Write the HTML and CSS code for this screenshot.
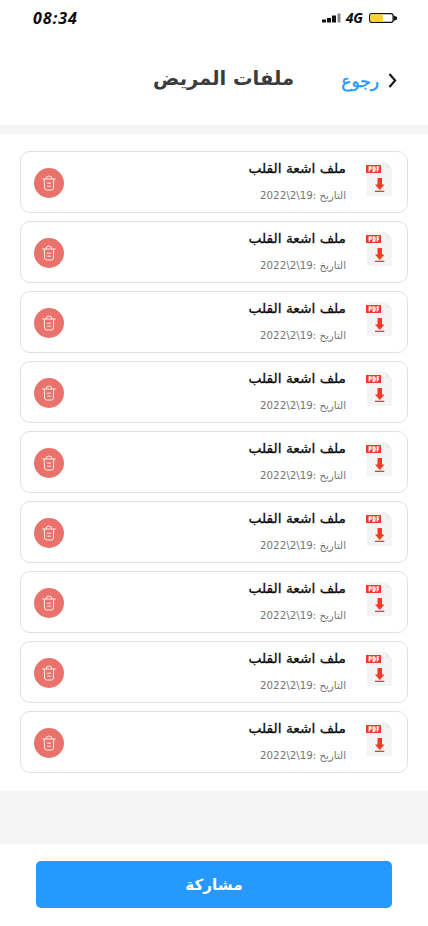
FILE: index.html
```
<!DOCTYPE html>
<html lang="ar" dir="rtl">
<head>
<meta charset="utf-8">
<meta name="viewport" content="width=device-width">
<title>ملفات المريض</title>
<link rel="stylesheet" href="styles.css">
</head>
<body>
<svg class="defs" aria-hidden="true">
  <symbol id="pdf" viewBox="0 0 27 34">
    <path d="M1 0H19.500L26 6.500V34H1Z" fill="#f4f4f5"/>
    <path d="M19.500 0V4.500Q19.500 6.500 21.500 6.500H26Z" fill="#ececed"/>
    <path d="M0 3H15V11H0Z" fill="#f23a2b"/>
    <path d="M3.300 9.500V4.900H4.300Q5.300 4.900 5.300 6T4.300 7.200H3.300M7.200 4.900V9.200H7.800Q9.100 9.200 9.100 7T7.800 4.900ZM11.300 9.600V4.900H13.200M11.300 7.200H13" fill="none" stroke="#fff" stroke-width="1.350"/>
    <path d="M11.500 16H16V22.500H18.500L13.700 28L9 22.500H11.500Z" fill="#f23a2b"/>
    <path d="M9 28.700H18.300V30H9Z" fill="#f23a2b"/>
  </symbol>
  <symbol id="trash" viewBox="0 0 14 16">
    <g fill="none" stroke="#fff" stroke-opacity=".85" stroke-width="1" stroke-linecap="round" stroke-linejoin="round">
      <path d="M.7 4H13.300M4.200 3.800Q4.200 1.200 6 1.200H8Q9.800 1.200 9.800 3.800M2.300 4.200L2.600 13Q2.700 15 4.500 15H9.500Q11.300 15 11.400 13L11.700 4.200"/>
      <path d="M5.300 8.200H8.700M5.500 11.200H8.500"/>
    </g>
  </symbol>
</svg>

<div class="status" dir="ltr">
  <span class="time">08:34</span>
  <svg class="signal" viewBox="0 0 19 10"><path d="M0 6.500H4V9.500H0ZM5 5H9V9.500H5ZM10 2.500H14V9.500H10Z" fill="#111"/><path d="M15.500 .5H18.500V9.500H15.500Z" fill="#888"/></svg>
  <span class="network">4G</span>
  <svg class="battery" viewBox="0 0 28 10"><rect x=".65" y=".65" width="23.500" height="8.700" rx="2.300" fill="#fff" stroke="#111" stroke-width="1.300"/><path d="M2.500 1.300H14V8.700H2.500Q1.300 8.700 1.300 7.500V2.500Q1.300 1.300 2.500 1.300" fill="#ffd22e"/><path d="M24.500 2.500L28 4V6.500L24.500 8Z" fill="#111"/></svg>
</div>

<header class="header">
  <a class="back"><svg class="chevron" viewBox="0 0 9 15"><path d="M1.500 1L7.200 7.500L1.500 14" fill="none" stroke="#111" stroke-width="2"/></svg><span class="back-label">رجوع</span></a>
  <h1 class="title">ملفات المريض</h1>
</header>

<main class="files">
  <article class="file"><svg class="pdf"><use href="#pdf"/></svg><div class="info"><h2 class="name">ملف اشعة القلب</h2><p class="date">التاريخ :19\2\2022</p></div><button class="delete" aria-label="حذف"><svg class="trash"><use href="#trash"/></svg></button></article>
  <article class="file"><svg class="pdf"><use href="#pdf"/></svg><div class="info"><h2 class="name">ملف اشعة القلب</h2><p class="date">التاريخ :19\2\2022</p></div><button class="delete" aria-label="حذف"><svg class="trash"><use href="#trash"/></svg></button></article>
  <article class="file"><svg class="pdf"><use href="#pdf"/></svg><div class="info"><h2 class="name">ملف اشعة القلب</h2><p class="date">التاريخ :19\2\2022</p></div><button class="delete" aria-label="حذف"><svg class="trash"><use href="#trash"/></svg></button></article>
  <article class="file"><svg class="pdf"><use href="#pdf"/></svg><div class="info"><h2 class="name">ملف اشعة القلب</h2><p class="date">التاريخ :19\2\2022</p></div><button class="delete" aria-label="حذف"><svg class="trash"><use href="#trash"/></svg></button></article>
  <article class="file"><svg class="pdf"><use href="#pdf"/></svg><div class="info"><h2 class="name">ملف اشعة القلب</h2><p class="date">التاريخ :19\2\2022</p></div><button class="delete" aria-label="حذف"><svg class="trash"><use href="#trash"/></svg></button></article>
  <article class="file"><svg class="pdf"><use href="#pdf"/></svg><div class="info"><h2 class="name">ملف اشعة القلب</h2><p class="date">التاريخ :19\2\2022</p></div><button class="delete" aria-label="حذف"><svg class="trash"><use href="#trash"/></svg></button></article>
  <article class="file"><svg class="pdf"><use href="#pdf"/></svg><div class="info"><h2 class="name">ملف اشعة القلب</h2><p class="date">التاريخ :19\2\2022</p></div><button class="delete" aria-label="حذف"><svg class="trash"><use href="#trash"/></svg></button></article>
  <article class="file"><svg class="pdf"><use href="#pdf"/></svg><div class="info"><h2 class="name">ملف اشعة القلب</h2><p class="date">التاريخ :19\2\2022</p></div><button class="delete" aria-label="حذف"><svg class="trash"><use href="#trash"/></svg></button></article>
  <article class="file"><svg class="pdf"><use href="#pdf"/></svg><div class="info"><h2 class="name">ملف اشعة القلب</h2><p class="date">التاريخ :19\2\2022</p></div><button class="delete" aria-label="حذف"><svg class="trash"><use href="#trash"/></svg></button></article>
</main>

<footer class="footer"><button class="share"><span class="share-label">مشاركة</span></button></footer>
</body>
</html>
```
FILE: styles.css
```
* { box-sizing: border-box; }
body {
  margin: 0;
  height: 926px;
  display: flex;
  flex-direction: column;
  overflow: hidden;
  background: #f5f5f5;
  color: #0c0c0c;
  font-family: "DejaVu Sans", sans-serif;
}
h1, h2, p { margin: 0; white-space: nowrap; }
svg { display: block; flex: none; }
button { border: 0; padding: 0; font: inherit; }
.defs { width: 0; height: 0; position: absolute; }
.status {
  height: 36px;
  display: flex;
  align-items: center;
  padding: 0 31px 0 33px;
  background: #fff;
  font: italic 700 16px/36px "Noto Sans", sans-serif;
}
.time { margin-right: auto; letter-spacing: 1px; }
.signal { width: 19px; height: 10px; margin-right: 5px; }
.network { font-size: 14px; margin-right: 6px; }
.battery { width: 28px; height: 10px; }
.header {
  height: 89px;
  display: flex;
  align-items: center;
  padding: 0 31px 0 0;
  background: #fff;
}
.back { display: flex; align-items: center; width: 103px; gap: 9px; }
.chevron { width: 9px; height: 15px; }
.back-label {
  color: #2699fb;
  font-size: 17px;
  line-height: 30px;
  -webkit-text-stroke: .5px currentColor;
}
.title { color: #3b3b3d; font-size: 19.5px; line-height: 30px; padding-bottom: 4px; }
.files {
  margin-top: 9px;
  height: 657px;
  padding: 17px 20px;
  display: flex;
  flex-direction: column;
  gap: 8px;
  background: #fff;
}
.file {
  height: 62px;
  flex: none;
  display: flex;
  align-items: flex-start;
  border: 1px solid #e1e1e2;
  border-radius: 10px;
  padding: 0 14px 0 13px;
}
.pdf { width: 27px; height: 34px; margin-top: 10px; }
.info { margin-right: 20px; flex: 1; }
.name {
  font-size: 13.8px;
  font-weight: 400;
  line-height: 20px;
  margin-top: 6px;
  -webkit-text-stroke: .3px currentColor;
}
.date { color: #747474; font-size: 10.25px; line-height: 16px; margin-top: 9px; }
.delete {
  width: 30px;
  height: 30px;
  margin-top: 16px;
  display: grid;
  place-items: center;
  border-radius: 50%;
  background: #e9736c;
}
.trash { width: 14px; height: 16px; }
.footer { height: 82px; margin-top: 53px; padding: 17px 36px; background: #fff; }
.share {
  width: 356px;
  height: 47px;
  border-radius: 5px;
  background: #2699ff;
  color: #fff;
  font-size: 15.2px;
  font-weight: 700;
}
```
